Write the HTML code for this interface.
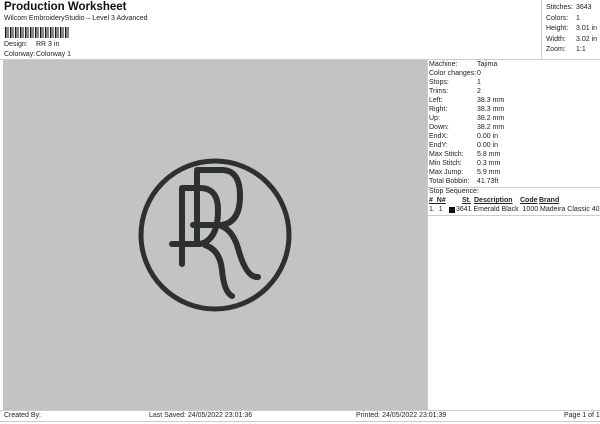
<!DOCTYPE html><html><head><style>
body{margin:0;width:600px;height:424px;background:#fff;font-family:"Liberation Sans",sans-serif;position:relative;overflow:hidden;color:#222}
.a{position:absolute;font-size:7px;white-space:nowrap}
</style></head><body>
<div class="a" style="left:4px;top:1px;font-size:11.5px;font-weight:bold;color:#111">Production Worksheet</div>
<div class="a" style="left:4px;top:15px">Wilcom EmbroideryStudio – Level 3 Advanced</div>
<div style="position:absolute;left:5px;top:27px;width:64px;height:11px;background:repeating-linear-gradient(90deg,#111 0 1.5px,#fff 1.5px 2.5px,#111 2.5px 3.5px,#fff 3.5px 5px)"></div>
<div class="a" style="left:4px;top:41px">Design:</div><div class="a" style="left:36px;top:41px">RR 3 in</div>
<div class="a" style="left:4px;top:51px">Colorway:</div><div class="a" style="left:36px;top:51px">Colorway 1</div>
<div style="position:absolute;left:541px;top:0;width:1px;height:60px;background:#ccc"></div>
<div class="a" style="left:546px;top:3px;line-height:10.5px">Stitches:<br>Colors:<br>Height:<br>Width:<br>Zoom:</div>
<div class="a" style="left:576px;top:3px;line-height:10.5px">3643<br>1<br>3.01 in<br>3.02 in<br>1:1</div>
<div style="position:absolute;left:0;top:59px;width:600px;height:1px;background:#ccc"></div>
<div style="position:absolute;left:3px;top:60px;width:424px;height:350px;background:#c3c3c3"></div>
<svg style="position:absolute;left:0;top:0" width="600" height="424">
<g fill="none" stroke="#2d312e" stroke-width="6" stroke-linecap="round" stroke-linejoin="round">
<circle cx="215" cy="235" r="74" stroke-width="5"/>
<path d="M197 172 V242 M197 170 H222 Q240 170 240 196 Q240 222 222 225 H193 M218 225 Q232 228 238 248 Q246 278 258 277"/>
<path d="M182 188 V264 M182 188 H200 Q218 188 218 210 Q218 240 200 244 H172 M205 245 Q220 250 222 270 Q224 292 232 296"/>
</g></svg>
<div style="position:absolute;left:427px;top:60px;width:1px;height:350px;background:#ccc"></div>
<div class="a" style="left:429px;top:60px;line-height:9px">Machine:<br>Color changes:<br>Stops:<br>Trims:<br>Left:<br>Right:<br>Up:<br>Down:<br>EndX:<br>EndY:<br>Max Stitch:<br>Min Stitch:<br>Max Jump:<br>Total Bobbin:</div>
<div class="a" style="left:477px;top:60px;line-height:9px">Tajima<br>0<br>1<br>2<br>38.3 mm<br>38.3 mm<br>38.2 mm<br>38.2 mm<br>0.00 in<br>0.00 in<br>5.8 mm<br>0.3 mm<br>5.9 mm<br>41.73ft</div>
<div style="position:absolute;left:427px;top:187px;width:173px;height:1px;background:#ccc"></div>
<div class="a" style="left:429px;top:188px">Stop Sequence:</div>
<div class="a" style="left:429px;top:197px;font-weight:bold;text-decoration:underline">#&nbsp; N#</div>
<div class="a" style="left:462px;top:197px;font-weight:bold;text-decoration:underline">St.</div>
<div class="a" style="left:474px;top:197px;font-weight:bold;text-decoration:underline">Description</div>
<div class="a" style="left:520px;top:197px;font-weight:bold;text-decoration:underline">Code</div>
<div class="a" style="left:539px;top:197px;font-weight:bold;text-decoration:underline">Brand</div>
<div class="a" style="left:429px;top:206px">1.&nbsp; 1</div>
<div style="position:absolute;left:449px;top:207px;width:6px;height:6px;background:#111"></div>
<div class="a" style="left:456px;top:206px">3641&nbsp;Emerald Black&nbsp; 1000&nbsp;Madeira Classic 40</div>
<div style="position:absolute;left:427px;top:215px;width:173px;height:1px;background:#ccc"></div>
<div style="position:absolute;left:0;top:410px;width:600px;height:1px;background:#ccc"></div>
<div style="position:absolute;left:0;top:421px;width:600px;height:1px;background:#ccc"></div>
<div class="a" style="left:4px;top:412px">Created By:</div>
<div class="a" style="left:149px;top:412px">Last Saved: 24/05/2022 23:01:36</div>
<div class="a" style="left:356px;top:412px">Printed: 24/05/2022 23:01:39</div>
<div class="a" style="left:564px;top:412px">Page 1 of 1</div>
</body></html>
